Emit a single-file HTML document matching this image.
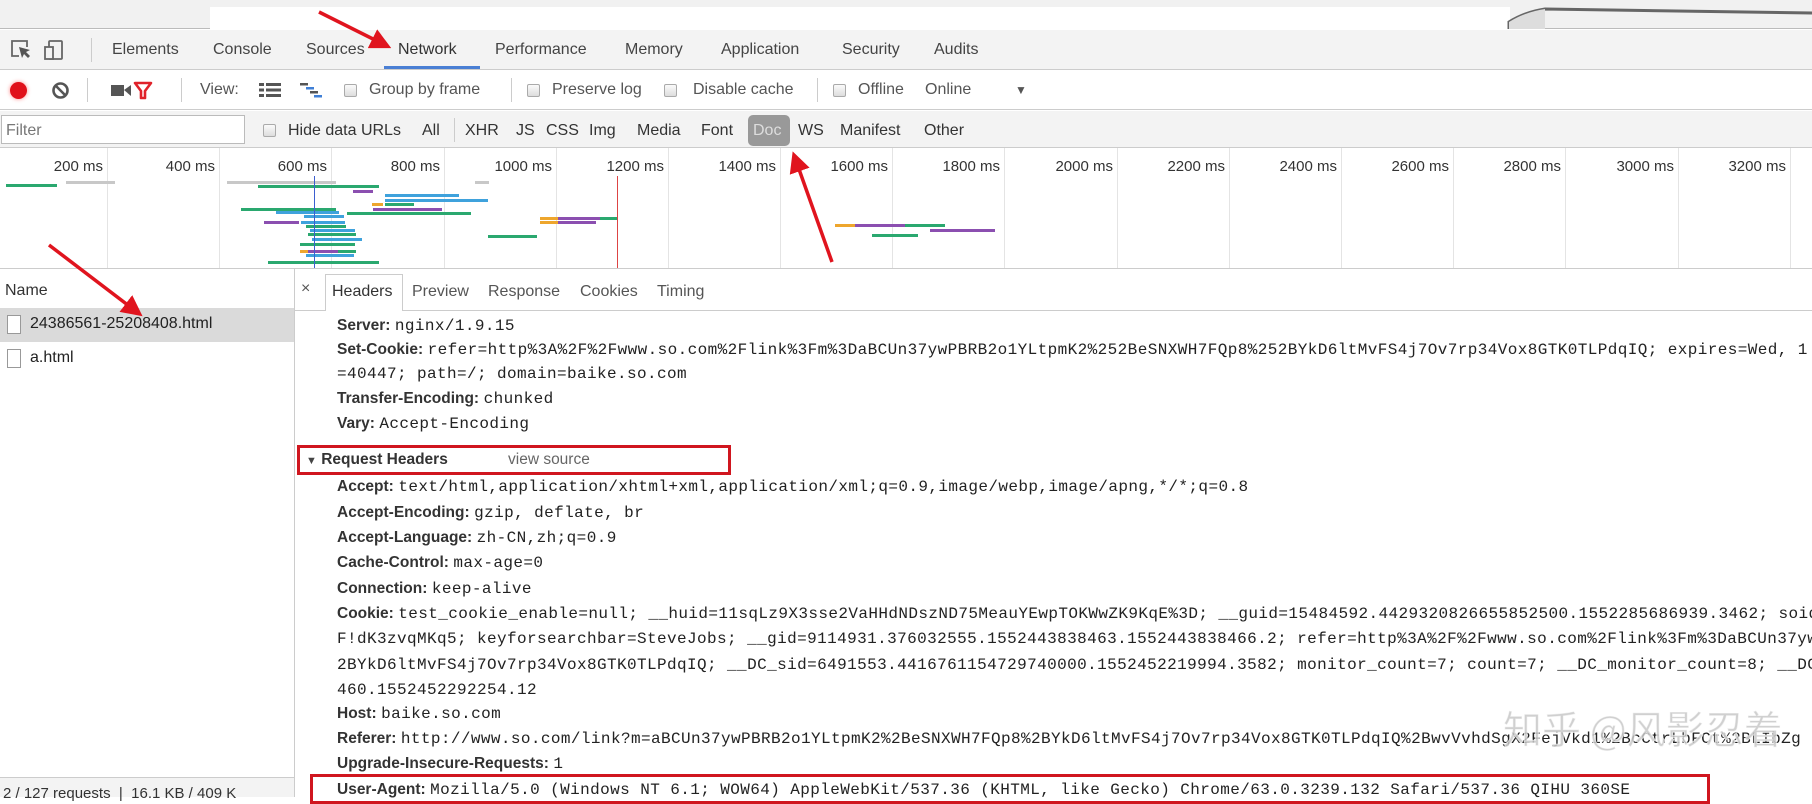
<!DOCTYPE html>
<html><head><meta charset="utf-8"><style>
*{margin:0;padding:0;box-sizing:border-box}
body{width:1812px;height:797px;overflow:hidden;background:#fff;position:relative;font-family:"Liberation Sans","Noto Sans CJK SC",sans-serif;font-size:16px;color:#333}
.a{position:absolute;white-space:nowrap}
.t{position:absolute;white-space:nowrap;top:41px;font-size:16px;color:#444}
.tb{position:absolute;white-space:nowrap;top:81px;font-size:16px;color:#555}
.fr{position:absolute;white-space:nowrap;top:122px;font-size:16px;color:#333}
.cb{position:absolute;width:13px;height:13px;border:1px solid #aaa;border-radius:2px;background:linear-gradient(#fafafa,#ddd)}
.sep{position:absolute;width:1px;background:#ccc}
.tl{position:absolute;top:158px;font-size:15px;color:#333;white-space:nowrap;text-align:right;width:80px}
.gl{position:absolute;top:148px;width:1px;height:120px;background:#e4e4e4}
.b{position:absolute;height:3px}
.g{background:#2aa86f}.bl{background:#3fa2dc}.p{background:#8b4fb0}.o{background:#eea62d}.gr{background:#c8c8c8}
.h{position:absolute;left:337px;white-space:nowrap;font-size:16px;line-height:20px;color:#222}
.h b{font-family:"Liberation Sans",sans-serif;font-weight:bold;color:#333;font-size:15.5px}
.h span{font-family:"Liberation Mono",monospace;font-size:16px;letter-spacing:0.4px}
</style></head><body>
<div class="a" style="left:0;top:0;width:1812px;height:29px;background:#f1f1f1;border-bottom:1px solid #bbb"></div>
<div class="a" style="left:210px;top:7px;width:1300px;height:22px;background:#fff"></div>
<svg class="a" style="left:1505px;top:0" width="307" height="30"><path d="M4 29 L4 22 Q20 12 40 9 L307 13" fill="none" stroke="#666" stroke-width="3"/><path d="M4 29 L4 22 Q20 12 40 9 L40 29Z" fill="#ddd"/></svg>
<div class="a" style="left:0;top:30px;width:1812px;height:40px;background:#f3f3f3;border-bottom:1px solid #ccc"></div>
<svg class="a" style="left:10px;top:39px" width="62" height="22"><path d="M9 17H2V2h15v6" fill="none" stroke="#666" stroke-width="1.8"/><path d="M9 8l3 11 2-4 4 4 2-2-4-4 4-2z" fill="#555"/><rect x="39" y="2" width="13" height="18" rx="1" fill="none" stroke="#666" stroke-width="1.8"/><rect x="35" y="8" width="8" height="12" fill="#f3f3f3" stroke="#666" stroke-width="1.8"/></svg>
<div class="sep" style="left:91px;top:38px;height:24px"></div>
<div class="t" style="left:112px">Elements</div>
<div class="t" style="left:213px">Console</div>
<div class="t" style="left:306px">Sources</div>
<div class="t" style="left:398px;color:#333">Network</div>
<div class="a" style="left:384px;top:66px;width:96px;height:3px;background:#4a7fd4"></div>
<div class="t" style="left:495px">Performance</div>
<div class="t" style="left:625px">Memory</div>
<div class="t" style="left:721px">Application</div>
<div class="t" style="left:842px">Security</div>
<div class="t" style="left:934px">Audits</div>
<div class="a" style="left:0;top:71px;width:1812px;height:39px;background:#fff;border-bottom:1px solid #ccc"></div>
<div class="a" style="left:10px;top:82px;width:17px;height:17px;border-radius:50%;background:#e0111a;box-shadow:0 0 4px #f88"></div>
<svg class="a" style="left:51px;top:81px" width="19" height="19"><circle cx="9.5" cy="9.5" r="7" fill="none" stroke="#555" stroke-width="2.6"/><path d="M4.5 4.5l10 10" stroke="#555" stroke-width="2.6"/></svg>
<div class="sep" style="left:87px;top:78px;height:24px"></div>
<svg class="a" style="left:111px;top:84px" width="22" height="13"><rect x="0" y="1" width="13" height="11" fill="#555"/><path d="M13 6l7-5v11z" fill="#555"/></svg>
<svg class="a" style="left:133px;top:81px" width="20" height="19"><path d="M2 2h16l-6 8v7h-4v-7z" fill="none" stroke="#e0222a" stroke-width="2.6" stroke-linejoin="round"/></svg>
<div class="sep" style="left:181px;top:78px;height:24px"></div>
<div class="tb" style="left:200px">View:</div>
<svg class="a" style="left:259px;top:83px" width="22" height="14"><rect x="0" y="0" width="5" height="3" fill="#555"/><rect x="7" y="0" width="15" height="3" fill="#555"/><rect x="0" y="5.5" width="5" height="3" fill="#555"/><rect x="7" y="5.5" width="15" height="3" fill="#555"/><rect x="0" y="11" width="5" height="3" fill="#555"/><rect x="7" y="11" width="15" height="3" fill="#555"/></svg>
<svg class="a" style="left:300px;top:83px" width="22" height="15"><rect x="0" y="0" width="8" height="2.5" fill="#555"/><rect x="6" y="4" width="8" height="2.5" fill="#3f7fd6"/><rect x="10" y="8" width="8" height="2.5" fill="#555"/><rect x="14" y="12" width="8" height="2.5" fill="#3f7fd6"/></svg>
<div class="cb" style="left:344px;top:84px"></div>
<div class="tb" style="left:369px">Group by frame</div>
<div class="sep" style="left:511px;top:78px;height:24px"></div>
<div class="cb" style="left:527px;top:84px"></div>
<div class="tb" style="left:552px">Preserve log</div>
<div class="cb" style="left:664px;top:84px"></div>
<div class="tb" style="left:693px">Disable cache</div>
<div class="sep" style="left:817px;top:78px;height:24px"></div>
<div class="cb" style="left:833px;top:84px"></div>
<div class="tb" style="left:858px">Offline</div>
<div class="tb" style="left:925px">Online</div>
<div class="tb" style="left:1015px;font-size:12px;top:83px">▼</div>
<div class="a" style="left:0;top:111px;width:1812px;height:37px;background:#f3f3f3;border-bottom:1px solid #ccc"></div>
<div class="a" style="left:1px;top:115px;width:244px;height:29px;background:#fff;border:1px solid #bbb"></div>
<div class="fr" style="left:6px;color:#777">Filter</div>
<div class="cb" style="left:263px;top:124px"></div>
<div class="fr" style="left:288px">Hide data URLs</div>
<div class="fr" style="left:422px">All</div>
<div class="sep" style="left:454px;top:118px;height:24px"></div>
<div class="fr" style="left:465px">XHR</div>
<div class="fr" style="left:516px">JS</div>
<div class="fr" style="left:546px">CSS</div>
<div class="fr" style="left:589px">Img</div>
<div class="fr" style="left:637px">Media</div>
<div class="fr" style="left:701px">Font</div>
<div class="a" style="left:748px;top:115px;width:42px;height:31px;background:#999;border-radius:5px"></div>
<div class="fr" style="left:753px;color:#ddd">Doc</div>
<div class="fr" style="left:798px">WS</div>
<div class="fr" style="left:840px">Manifest</div>
<div class="fr" style="left:924px">Other</div>
<div class="a" style="left:0;top:268px;width:1812px;height:1px;background:#ccc"></div>
<div class="gl" style="left:107px"></div><div class="gl" style="left:219px"></div><div class="gl" style="left:331px"></div><div class="gl" style="left:444px"></div><div class="gl" style="left:556px"></div><div class="gl" style="left:668px"></div><div class="gl" style="left:780px"></div><div class="gl" style="left:892px"></div><div class="gl" style="left:1004px"></div><div class="gl" style="left:1117px"></div><div class="gl" style="left:1229px"></div><div class="gl" style="left:1341px"></div><div class="gl" style="left:1453px"></div><div class="gl" style="left:1565px"></div><div class="gl" style="left:1678px"></div><div class="gl" style="left:1790px"></div>
<div class="tl" style="left:23px">200 ms</div><div class="tl" style="left:135px">400 ms</div><div class="tl" style="left:247px">600 ms</div><div class="tl" style="left:360px">800 ms</div><div class="tl" style="left:472px">1000 ms</div><div class="tl" style="left:584px">1200 ms</div><div class="tl" style="left:696px">1400 ms</div><div class="tl" style="left:808px">1600 ms</div><div class="tl" style="left:920px">1800 ms</div><div class="tl" style="left:1033px">2000 ms</div><div class="tl" style="left:1145px">2200 ms</div><div class="tl" style="left:1257px">2400 ms</div><div class="tl" style="left:1369px">2600 ms</div><div class="tl" style="left:1481px">2800 ms</div><div class="tl" style="left:1594px">3000 ms</div><div class="tl" style="left:1706px">3200 ms</div>
<div class="b g" style="left:6px;top:184px;width:51px"></div>
<div class="b gr" style="left:66px;top:181px;width:49px"></div>
<div class="b gr" style="left:227px;top:181px;width:109px"></div>
<div class="b gr" style="left:475px;top:181px;width:14px"></div>
<div class="b g" style="left:258px;top:185px;width:121px"></div>
<div class="b p" style="left:353px;top:190px;width:20px"></div>
<div class="b bl" style="left:385px;top:194px;width:74px"></div>
<div class="b bl" style="left:385px;top:199px;width:103px"></div>
<div class="b o" style="left:372px;top:203px;width:11px"></div><div class="b g" style="left:385px;top:203px;width:29px"></div>
<div class="b g" style="left:241px;top:208px;width:95px"></div>
<div class="b p" style="left:373px;top:208px;width:69px"></div>
<div class="b bl" style="left:276px;top:211px;width:63px"></div>
<div class="b g" style="left:347px;top:212px;width:124px"></div>
<div class="b bl" style="left:304px;top:215px;width:40px"></div>
<div class="b o" style="left:540px;top:217px;width:18px"></div><div class="b p" style="left:558px;top:217px;width:42px"></div><div class="b g" style="left:600px;top:217px;width:17px"></div>
<div class="b p" style="left:264px;top:221px;width:35px"></div><div class="b bl" style="left:301px;top:221px;width:44px"></div>
<div class="b o" style="left:540px;top:221px;width:18px"></div><div class="b p" style="left:558px;top:221px;width:38px"></div>
<div class="b g" style="left:306px;top:225px;width:40px"></div>
<div class="b bl" style="left:310px;top:229px;width:45px"></div>
<div class="b g" style="left:308px;top:233px;width:48px"></div>
<div class="b g" style="left:488px;top:235px;width:49px"></div>
<div class="b bl" style="left:312px;top:238px;width:50px"></div>
<div class="b o" style="left:835px;top:224px;width:20px"></div><div class="b p" style="left:855px;top:224px;width:50px"></div><div class="b g" style="left:905px;top:224px;width:40px"></div><div class="b p" style="left:930px;top:229px;width:65px"></div>
<div class="b g" style="left:872px;top:234px;width:46px"></div>
<div class="b g" style="left:300px;top:243px;width:55px"></div>
<div class="b o" style="left:300px;top:250px;width:8px"></div><div class="b p" style="left:308px;top:250px;width:30px"></div><div class="b g" style="left:338px;top:250px;width:18px"></div>
<div class="b bl" style="left:306px;top:254px;width:48px"></div>
<div class="b g" style="left:268px;top:261px;width:111px"></div>
<div class="a" style="left:314px;top:176px;width:1px;height:92px;background:#3b5fd0"></div>
<div class="a" style="left:617px;top:176px;width:1px;height:92px;background:#d44"></div>
<div class="a" style="left:294px;top:269px;width:1px;height:528px;background:#ccc"></div>
<div class="a" style="left:5px;top:282px;font-size:16px;color:#333">Name</div>
<div class="a" style="left:0;top:308px;width:294px;height:34px;background:#dadada"></div>
<div class="a" style="left:7px;top:315px;width:14px;height:19px;border:1px solid #999;background:#fff"></div>
<div class="a" style="left:30px;top:315px;font-size:16px;color:#222">24386561-25208408.html</div>
<div class="a" style="left:7px;top:349px;width:14px;height:19px;border:1px solid #999;background:#fff"></div>
<div class="a" style="left:30px;top:349px;font-size:16px;color:#222">a.html</div>
<div class="a" style="left:0;top:777px;width:294px;height:20px;background:#f3f3f3;border-top:1px solid #ccc"></div>
<div class="a" style="left:3px;top:785px;font-size:15px;color:#333">2 / 127 requests &nbsp;|&nbsp; 16.1 KB / 409 K</div>
<div class="a" style="left:295px;top:310px;width:1517px;height:1px;background:#ccc"></div>
<div class="a" style="left:301px;top:280px;font-size:16px;color:#555">×</div>
<div class="a" style="left:325px;top:274px;width:78px;height:37px;background:#fff;border:1px solid #ccc;border-bottom:none"></div>
<div class="a" style="left:332px;top:283px;font-size:16px;color:#333">Headers</div>
<div class="a" style="left:412px;top:283px;font-size:16px;color:#555">Preview</div>
<div class="a" style="left:488px;top:283px;font-size:16px;color:#555">Response</div>
<div class="a" style="left:580px;top:283px;font-size:16px;color:#555">Cookies</div>
<div class="a" style="left:657px;top:283px;font-size:16px;color:#555">Timing</div>
<div class="h" style="top:316px"><b>Server:</b> <span>nginx/1.9.15</span></div>
<div class="h" style="top:340px"><b>Set-Cookie:</b> <span>refer=http%3A%2F%2Fwww.so.com%2Flink%3Fm%3DaBCUn37ywPBRB2o1YLtpmK2%252BeSNXWH7FQp8%252BYkD6ltMvFS4j7Ov7rp34Vox8GTK0TLPdqIQ; expires=Wed, 1</span></div>
<div class="h" style="top:364px"><span>=40447; path=/; domain=baike.so.com</span></div>
<div class="h" style="top:389px"><b>Transfer-Encoding:</b> <span>chunked</span></div>
<div class="h" style="top:414px"><b>Vary:</b> <span>Accept-Encoding</span></div>
<div class="a" style="left:297px;top:445px;width:434px;height:30px;border:3px solid #d0161f"></div>
<div class="a" style="left:306px;top:451px;font-size:15.5px;font-weight:bold;color:#333"><span style="font-size:11px;color:#444">▼</span> Request Headers</div>
<div class="a" style="left:508px;top:451px;font-size:15.5px;color:#666">view source</div>
<div class="h" style="top:477px"><b>Accept:</b> <span>text/html,application/xhtml+xml,application/xml;q=0.9,image/webp,image/apng,*/*;q=0.8</span></div>
<div class="h" style="top:503px"><b>Accept-Encoding:</b> <span>gzip, deflate, br</span></div>
<div class="h" style="top:528px"><b>Accept-Language:</b> <span>zh-CN,zh;q=0.9</span></div>
<div class="h" style="top:553px"><b>Cache-Control:</b> <span>max-age=0</span></div>
<div class="h" style="top:579px"><b>Connection:</b> <span>keep-alive</span></div>
<div class="h" style="top:604px"><b>Cookie:</b> <span>test_cookie_enable=null; __huid=11sqLz9X3sse2VaHHdNDszND75MeauYEwpTOKWwZK9KqE%3D; __guid=15484592.4429320826655852500.1552285686939.3462; soid</span></div>
<div class="h" style="top:629px"><span>F!dK3zvqMKq5; keyforsearchbar=SteveJobs; __gid=9114931.376032555.1552443838463.1552443838466.2; refer=http%3A%2F%2Fwww.so.com%2Flink%3Fm%3DaBCUn37ywP</span></div>
<div class="h" style="top:655px"><span>2BYkD6ltMvFS4j7Ov7rp34Vox8GTK0TLPdqIQ; __DC_sid=6491553.4416761154729740000.1552452219994.3582; monitor_count=7; count=7; __DC_monitor_count=8; __DC_</span></div>
<div class="h" style="top:680px"><span>460.1552452292254.12</span></div>
<div class="h" style="top:704px"><b>Host:</b> <span>baike.so.com</span></div>
<div class="h" style="top:729px"><b>Referer:</b> <span>http://www.so.com/link?m=aBCUn37ywPBRB2o1YLtpmK2%2BeSNXWH7FQp8%2BYkD6ltMvFS4j7Ov7rp34Vox8GTK0TLPdqIQ%2BwvVvhdSgX2FejVkd1%2BcCtrLbFCt%2BLIbZg</span></div>
<div class="h" style="top:754px"><b>Upgrade-Insecure-Requests:</b> <span>1</span></div>
<div class="a" style="left:310px;top:774px;width:1400px;height:30px;border:3px solid #d0161f"></div>
<div class="h" style="top:780px"><b>User-Agent:</b> <span>Mozilla/5.0 (Windows NT 6.1; WOW64) AppleWebKit/537.36 (KHTML, like Gecko) Chrome/63.0.3239.132 Safari/537.36 QIHU 360SE</span></div>
<div class="a" style="left:1503px;top:700px;font-size:39px;color:rgba(200,200,200,0.85);font-family:'Noto Sans CJK SC',sans-serif;-webkit-text-stroke:1px rgba(255,255,255,0.6)">知乎 @风影忍着</div>
<svg class="a" style="left:0;top:0" width="1812" height="797">
<defs><marker id="m" markerWidth="6" markerHeight="6" refX="4" refY="3" orient="auto"><path d="M0 0L6 3L0 6z" fill="#e0141e"/></marker></defs>
<line x1="319" y1="12" x2="385" y2="45" stroke="#e0141e" stroke-width="3.5" marker-end="url(#m)"/>
<line x1="832" y1="262" x2="795" y2="158" stroke="#e0141e" stroke-width="3.5" marker-end="url(#m)"/>
<line x1="49" y1="245" x2="137" y2="312" stroke="#e0141e" stroke-width="3.5" marker-end="url(#m)"/>
</svg>
</body></html>
